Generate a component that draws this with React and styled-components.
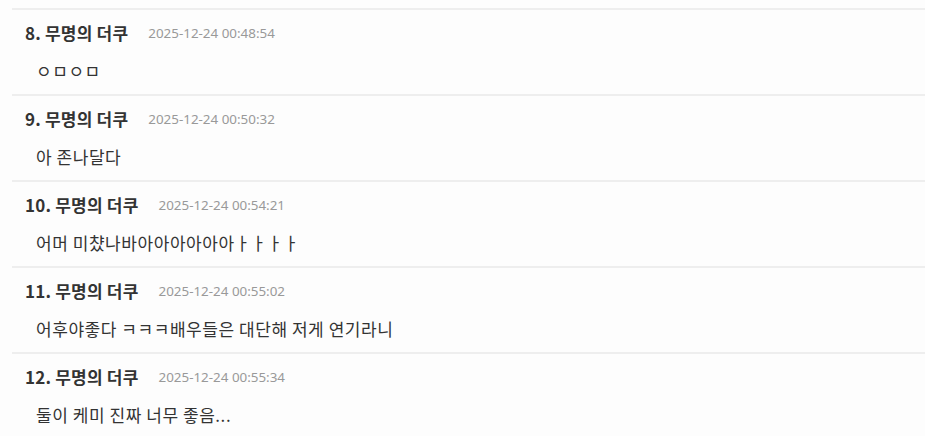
import React from 'react'
import styled, { createGlobalStyle } from 'styled-components'

const Global = createGlobalStyle`
  body {
    margin: 0;
    background: #fdfdfd;
    font-family: "Noto Sans CJK KR", "Noto Sans", sans-serif;
  }
`

const comments = [
  { no: 8, time: '2025-12-24 00:48:54', text: 'ㅇㅁㅇㅁ' },
  { no: 9, time: '2025-12-24 00:50:32', text: '아 존나달다' },
  { no: 10, time: '2025-12-24 00:54:21', text: '어머 미챴나바아아아아아아ㅏㅏㅏㅏ' },
  { no: 11, time: '2025-12-24 00:55:02', text: '어후야좋다 ㅋㅋㅋ배우들은 대단해 저게 연기라니' },
  { no: 12, time: '2025-12-24 00:55:34', text: '둘이 케미 진짜 너무 좋음...' },
]

export default function App() {
  return (
    <>
      <Global />
      <List>
        {comments.map(c => (
          <Item key={c.no}>
            <Head>
              <Name>{c.no}. 무명의 더쿠</Name>
              <Time>{c.time}</Time>
            </Head>
            <Body>{c.text}</Body>
          </Item>
        ))}
      </List>
    </>
  )
}

const List = styled.ul`
  list-style: none;
  margin: 0;
  padding: 8px 0 0 12px;
`

const Item = styled.li`
  border-top: 2px solid #eeeeee;
  padding: 13px 0 11px 13px;
  display: flex;
  flex-direction: column;
  gap: 16px;
`

const Head = styled.div`
  display: flex;
  align-items: center;
  gap: 20px;
  height: 20px;
`

const Name = styled.span`
  font-size: 17px;
  font-weight: 700;
  color: #333;
  line-height: 20px;
  letter-spacing: 0.2px;
`

const Time = styled.span`
  font-family: "Noto Sans", sans-serif;
  font-size: 13.4px;
  color: #999;
  line-height: 20px;
`

const Body = styled.p`
  margin: 0;
  padding-left: 11px;
  font-size: 17px;
  color: #333;
  line-height: 24px;
  height: 24px;
  letter-spacing: 0.55px;
`
